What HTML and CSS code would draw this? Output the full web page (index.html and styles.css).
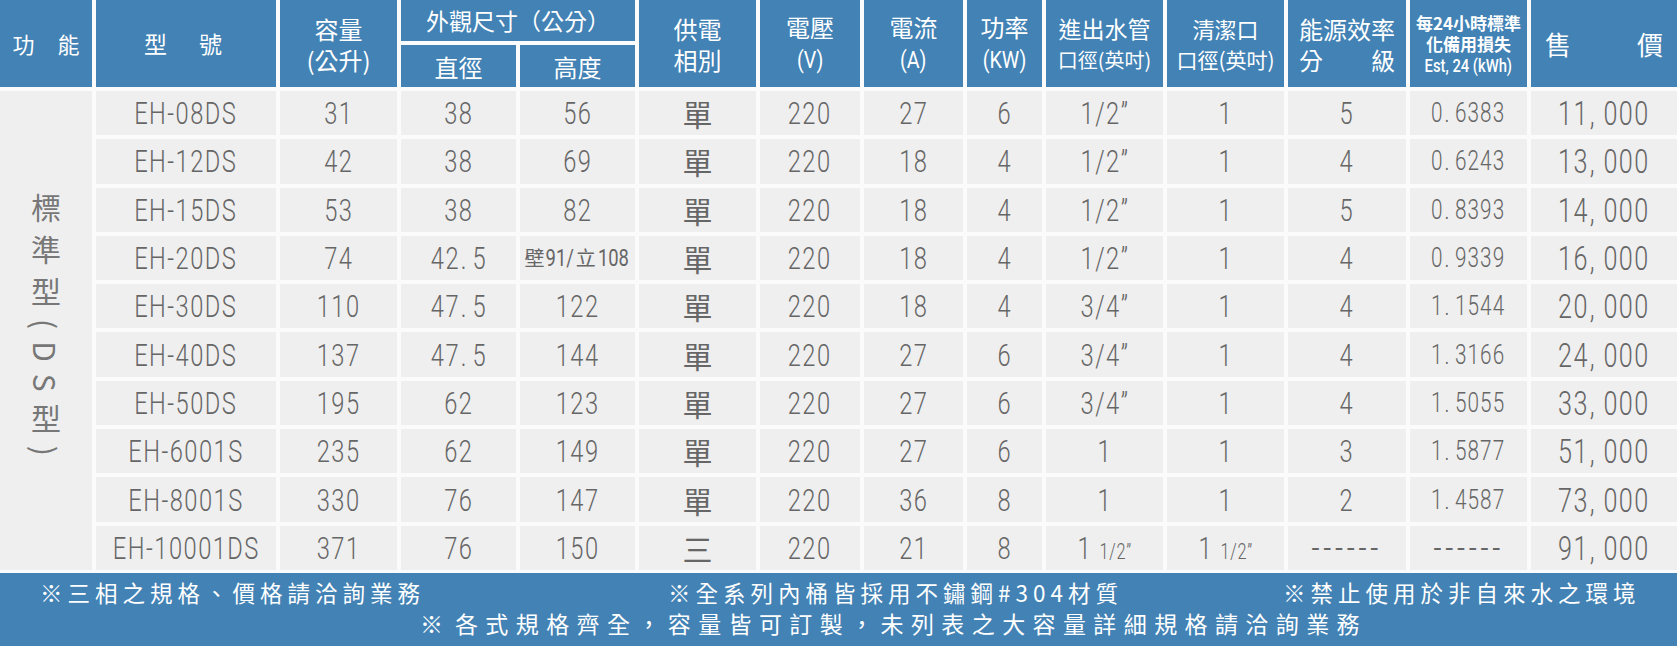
FILE: index.html
```html
<!DOCTYPE html>
<html lang="zh-Hant">
<head>
<meta charset="utf-8">
<title>電熱水器規格表</title>
<link rel="stylesheet" href="styles.css">
</head>
<body>
<div class="tbl">
  <div class="h r2 row sp1"><span>功</span><span>能</span></div>
  <div class="h r2 row sp2"><span>型</span><span>號</span></div>
  <div class="h r2"><div>容量</div><div>(公升)</div></div>
  <div class="h c2 dim">外觀尺寸（公分）</div>
  <div class="h r2"><div>供電</div><div>相別</div></div>
  <div class="h r2"><div>電壓</div><div><span class="lt">(V)</span></div></div>
  <div class="h r2"><div>電流</div><div><span class="lt">(A)</span></div></div>
  <div class="h r2"><div>功率</div><div><span class="lt">(KW)</span></div></div>
  <div class="h r2"><div class="l23">進出水管</div><div class="l20">口徑(英吋)</div></div>
  <div class="h r2"><div class="l22">清潔口</div><div class="l21">口徑(英吋)</div></div>
  <div class="h r2"><div>能源效率</div><div class="just"><span>分</span><span>級</span></div></div>
  <div class="h r2 small"><div>每24小時標準</div><div>化備用損失</div><div><span class="lt">Est, 24 (kWh)</span></div></div>
  <div class="h r2 row sp3"><span>售</span><span>價</span></div>
  <div class="h">直徑</div>
  <div class="h">高度</div>

  <div class="c vcell"><div class="vt">標準型(DS型)</div></div>

  <div class="c"><span class="n">EH-08DS</span></div><div class="c"><span class="n">31</span></div><div class="c"><span class="n">38</span></div><div class="c"><span class="n">56</span></div><div class="c">單</div><div class="c"><span class="n">220</span></div><div class="c"><span class="n">27</span></div><div class="c"><span class="n">6</span></div><div class="c"><span class="n">1/2”</span></div><div class="c"><span class="n">1</span></div><div class="c"><span class="n">5</span></div><div class="c"><span class="n e">0<i>.</i>6383</span></div><div class="c"><span class="n p">11<i>,</i>000</span></div>

  <div class="c"><span class="n">EH-12DS</span></div><div class="c"><span class="n">42</span></div><div class="c"><span class="n">38</span></div><div class="c"><span class="n">69</span></div><div class="c">單</div><div class="c"><span class="n">220</span></div><div class="c"><span class="n">18</span></div><div class="c"><span class="n">4</span></div><div class="c"><span class="n">1/2”</span></div><div class="c"><span class="n">1</span></div><div class="c"><span class="n">4</span></div><div class="c"><span class="n e">0<i>.</i>6243</span></div><div class="c"><span class="n p">13<i>,</i>000</span></div>

  <div class="c"><span class="n">EH-15DS</span></div><div class="c"><span class="n">53</span></div><div class="c"><span class="n">38</span></div><div class="c"><span class="n">82</span></div><div class="c">單</div><div class="c"><span class="n">220</span></div><div class="c"><span class="n">18</span></div><div class="c"><span class="n">4</span></div><div class="c"><span class="n">1/2”</span></div><div class="c"><span class="n">1</span></div><div class="c"><span class="n">5</span></div><div class="c"><span class="n e">0<i>.</i>8393</span></div><div class="c"><span class="n p">14<i>,</i>000</span></div>

  <div class="c"><span class="n">EH-20DS</span></div><div class="c"><span class="n">74</span></div><div class="c"><span class="n">42<i>.</i>5</span></div><div class="c wall">壁<span class="n s">91/</span>立<span class="n s">108</span></div><div class="c">單</div><div class="c"><span class="n">220</span></div><div class="c"><span class="n">18</span></div><div class="c"><span class="n">4</span></div><div class="c"><span class="n">1/2”</span></div><div class="c"><span class="n">1</span></div><div class="c"><span class="n">4</span></div><div class="c"><span class="n e">0<i>.</i>9339</span></div><div class="c"><span class="n p">16<i>,</i>000</span></div>

  <div class="c"><span class="n">EH-30DS</span></div><div class="c"><span class="n">110</span></div><div class="c"><span class="n">47<i>.</i>5</span></div><div class="c"><span class="n">122</span></div><div class="c">單</div><div class="c"><span class="n">220</span></div><div class="c"><span class="n">18</span></div><div class="c"><span class="n">4</span></div><div class="c"><span class="n">3/4”</span></div><div class="c"><span class="n">1</span></div><div class="c"><span class="n">4</span></div><div class="c"><span class="n e">1<i>.</i>1544</span></div><div class="c"><span class="n p">20<i>,</i>000</span></div>

  <div class="c"><span class="n">EH-40DS</span></div><div class="c"><span class="n">137</span></div><div class="c"><span class="n">47<i>.</i>5</span></div><div class="c"><span class="n">144</span></div><div class="c">單</div><div class="c"><span class="n">220</span></div><div class="c"><span class="n">27</span></div><div class="c"><span class="n">6</span></div><div class="c"><span class="n">3/4”</span></div><div class="c"><span class="n">1</span></div><div class="c"><span class="n">4</span></div><div class="c"><span class="n e">1<i>.</i>3166</span></div><div class="c"><span class="n p">24<i>,</i>000</span></div>

  <div class="c"><span class="n">EH-50DS</span></div><div class="c"><span class="n">195</span></div><div class="c"><span class="n">62</span></div><div class="c"><span class="n">123</span></div><div class="c">單</div><div class="c"><span class="n">220</span></div><div class="c"><span class="n">27</span></div><div class="c"><span class="n">6</span></div><div class="c"><span class="n">3/4”</span></div><div class="c"><span class="n">1</span></div><div class="c"><span class="n">4</span></div><div class="c"><span class="n e">1<i>.</i>5055</span></div><div class="c"><span class="n p">33<i>,</i>000</span></div>

  <div class="c"><span class="n">EH-6001S</span></div><div class="c"><span class="n">235</span></div><div class="c"><span class="n">62</span></div><div class="c"><span class="n">149</span></div><div class="c">單</div><div class="c"><span class="n">220</span></div><div class="c"><span class="n">27</span></div><div class="c"><span class="n">6</span></div><div class="c"><span class="n">1</span></div><div class="c"><span class="n">1</span></div><div class="c"><span class="n">3</span></div><div class="c"><span class="n e">1<i>.</i>5877</span></div><div class="c"><span class="n p">51<i>,</i>000</span></div>

  <div class="c"><span class="n">EH-8001S</span></div><div class="c"><span class="n">330</span></div><div class="c"><span class="n">76</span></div><div class="c"><span class="n">147</span></div><div class="c">單</div><div class="c"><span class="n">220</span></div><div class="c"><span class="n">36</span></div><div class="c"><span class="n">8</span></div><div class="c"><span class="n">1</span></div><div class="c"><span class="n">1</span></div><div class="c"><span class="n">2</span></div><div class="c"><span class="n e">1<i>.</i>4587</span></div><div class="c"><span class="n p">73<i>,</i>000</span></div>

  <div class="c"><span class="n">EH-10001DS</span></div><div class="c"><span class="n">371</span></div><div class="c"><span class="n">76</span></div><div class="c"><span class="n">150</span></div><div class="c">三</div><div class="c"><span class="n">220</span></div><div class="c"><span class="n">21</span></div><div class="c"><span class="n">8</span></div><div class="c"><span class="n">1 <small>1/2”</small></span></div><div class="c"><span class="n">1 <small>1/2”</small></span></div><div class="c"><span class="n dash">------</span></div><div class="c"><span class="n dash">------</span></div><div class="c"><span class="n p">91<i>,</i>000</span></div>
</div>

<div class="foot">
  <div class="fl1">
    <span>※三相之規格、價格請洽詢業務</span>
    <span>※全系列內桶皆採用不鏽鋼#304材質</span>
    <span>※禁止使用於非自來水之環境</span>
  </div>
  <div class="fl2">※ 各式規格齊全，容量皆可訂製，未列表之大容量詳細規格請洽詢業務</div>
</div>
</body>
</html>
```

FILE: styles.css
```css
* { box-sizing: border-box; margin: 0; padding: 0; }

html, body {
  width: 1677px;
  height: 646px;
  overflow: hidden;
  background: #fbfbfb;
}

body {
  font-family: "Noto Sans CJK TC", "Noto Sans", sans-serif;
}

.tbl {
  display: grid;
  grid-template-columns: 92px 180px 117px 115px 115px 117px 100px 99px 75px 117px 117px 118px 117px 146px;
  grid-template-rows: 41px 42px repeat(10, 44.3px);
  gap: 4px;
}

.h {
  background: #4282b5;
  color: #fff;
  display: flex;
  flex-direction: column;
  align-items: center;
  justify-content: center;
  font-size: 24px;
  line-height: 31px;
  white-space: nowrap;
}

.r2 { grid-row: span 2; }
.c2 { grid-column: span 2; }

.h.row { flex-direction: row; }
.sp1 { font-size: 22px; gap: 23px; }
.sp2 { font-size: 23px; gap: 32px; padding-right: 6px; }
.sp3 { font-size: 26px; gap: 66px; }
.dim { font-size: 23px; }

.l23 { font-size: 23px; }
.l20 { font-size: 20px; }
.l22 { font-size: 22px; }
.l21 { font-size: 21px; }

.just {
  display: flex;
  justify-content: space-between;
  width: 96px;
}

.small {
  font-size: 17px;
  font-weight: 700;
  line-height: 21px;
}
.small .lt { font-weight: 500; font-size: 18px; }

.lt {
  display: inline-block;
  font-family: Roboto, "Liberation Sans", sans-serif;
  font-weight: 400;
  transform: scaleX(0.82);
}

.c {
  background: #efefef;
  color: #666;
  display: flex;
  align-items: center;
  justify-content: center;
  font-size: 30px;
  line-height: 1;
  white-space: nowrap;
}

.n {
  display: inline-block;
  font-family: Roboto, "Liberation Sans", sans-serif;
  font-weight: 300;
  font-size: 32px;
  line-height: 1;
  letter-spacing: 2px;
  transform: scaleX(0.74);
}

.n i { font-style: normal; margin: 0 6px 0 1px; }

.n small { font-size: 22px; letter-spacing: 1px; }

.e { font-size: 28px; letter-spacing: 1.5px; }
.p { font-size: 34px; letter-spacing: 2px; }
.p i { margin: 0 10px 0 1px; }
.dash { letter-spacing: 5px; font-size: 38px; }

.wall { font-size: 20px; }
.wall .n.s { font-size: 23px; letter-spacing: 0; margin: 0 -2px; transform: scaleX(0.8); font-weight: 400; }

.vcell {
  grid-column: 1;
  grid-row: 3 / span 10;
}

.vt {
  writing-mode: vertical-rl;
  font-size: 30px;
  letter-spacing: 12px;
  color: #777;
  line-height: 1;
}

.foot {
  margin-top: 3px;
  height: 73px;
  background: #4282b5;
  color: #fff;
  font-size: 22.5px;
  font-weight: 400;
  line-height: 31px;
  padding-top: 4px;
  letter-spacing: 5px;
  white-space: nowrap;
}

.fl1 {
  display: grid;
  grid-template-columns: 628px 615px 1fr;
  padding-left: 40px;
}

.fl2 {
  padding-left: 420px;
  letter-spacing: 7.4px;
  word-spacing: -8px;
  font-size: 23px;
}
```
